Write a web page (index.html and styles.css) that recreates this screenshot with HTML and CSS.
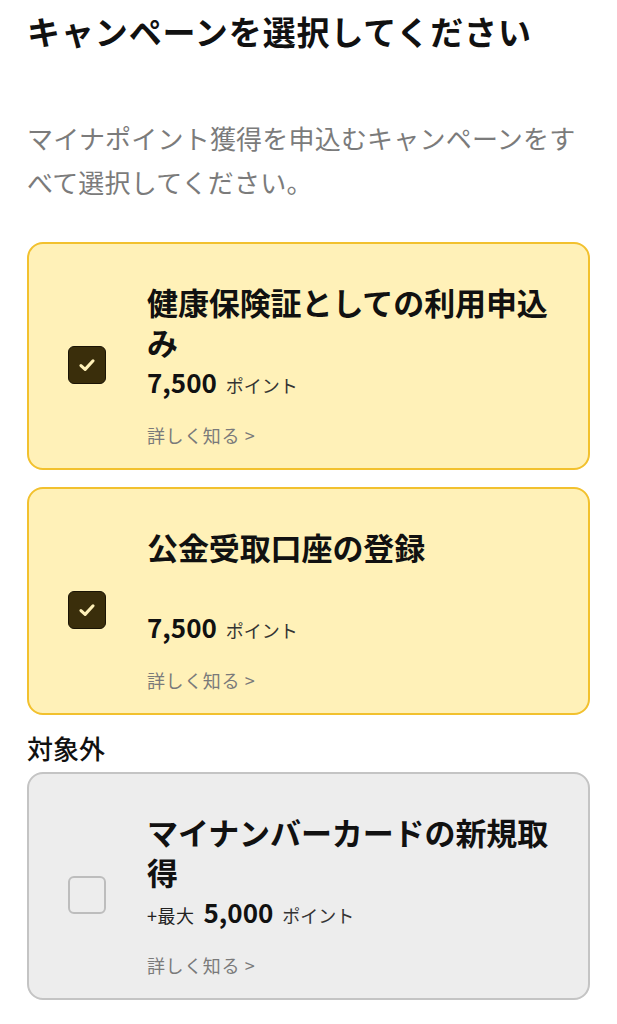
FILE: index.html
```html
<!DOCTYPE html>
<html lang="ja">
<head>
    <meta charset="UTF-8">
    <meta name="viewport" content="width=device-width, initial-scale=1.0">
    <title>キャンペーン選択</title>
    <link rel="stylesheet" href="styles.css">
</head>
<body>
    <div class="page">
        <h1 class="page-title">キャンペーンを選択してください</h1>
        <p class="page-desc">マイナポイント獲得を申込むキャンペーンをすべて選択してください。</p>

        <div class="card-list">
            <div class="card selected">
                <div class="check checked">
                    <svg width="22" height="22" viewBox="0 0 20 20">
                        <polyline points="4.5,10.5 8.3,14 15.5,6.2" fill="none" stroke="#fff1b8" stroke-width="2.8" stroke-linecap="round" stroke-linejoin="round"/>
                    </svg>
                </div>
                <div class="card-body">
                    <div class="card-title">健康保険証としての利用申込み</div>
                    <div class="card-points">
                        <span class="num">7,500</span>
                        <span class="unit">ポイント</span>
                    </div>
                    <div class="card-link">詳しく知る &gt;</div>
                </div>
            </div>

            <div class="card selected">
                <div class="check checked">
                    <svg width="22" height="22" viewBox="0 0 20 20">
                        <polyline points="4.5,10.5 8.3,14 15.5,6.2" fill="none" stroke="#fff1b8" stroke-width="2.8" stroke-linecap="round" stroke-linejoin="round"/>
                    </svg>
                </div>
                <div class="card-body">
                    <div class="card-title">公金受取口座の登録</div>
                    <div class="card-points">
                        <span class="num">7,500</span>
                        <span class="unit">ポイント</span>
                    </div>
                    <div class="card-link">詳しく知る &gt;</div>
                </div>
            </div>
        </div>

        <h2 class="section-label">対象外</h2>

        <div class="card disabled">
            <div class="check"></div>
            <div class="card-body">
                <div class="card-title">マイナンバーカードの新規取得</div>
                <div class="card-points">
                    <span class="prefix">+最大</span>
                    <span class="num">5,000</span>
                    <span class="unit">ポイント</span>
                </div>
                <div class="card-link">詳しく知る &gt;</div>
            </div>
        </div>
    </div>
</body>
</html>
```

FILE: styles.css
```css
body {
    margin: 0;
    background-color: #ffffff;
    font-family: "Noto Sans CJK JP", "Noto Sans", sans-serif;
    color: #111111;
}

.page {
    padding: 8px 27px 0;
}

.page-title {
    margin: 0;
    font-size: 33px;
    line-height: 46px;
    font-weight: 700;
    letter-spacing: 0.9px;
}

.page-desc {
    margin: 62px 0 0;
    font-size: 26px;
    line-height: 44px;
    color: #7b7b7b;
    letter-spacing: 0.2px;
}

.card-list {
    display: flex;
    flex-direction: column;
    gap: 17px;
    margin-top: 38px;
}

.card {
    display: flex;
    align-items: center;
    gap: 41px;
    padding: 38px 20px 21px 39px;
    border: 2px solid #f2c12e;
    border-radius: 16px;
    background-color: #fff1b8;
}

.card.disabled {
    margin-top: 6px;
    border-color: #c4c4c4;
    background-color: #ededed;
}

.check {
    flex: none;
    box-sizing: border-box;
    width: 38px;
    height: 38px;
    border: 2px solid #bdbdbd;
    border-radius: 6px;
    display: flex;
    align-items: center;
    justify-content: center;
}

.check.checked {
    border: 1px solid #1a1405;
    background-color: #3a2e0b;
}

.card-body {
    flex: 1;
    min-width: 0;
}

.card-title {
    min-height: 80px;
    font-size: 31px;
    line-height: 40px;
    font-weight: 700;
    letter-spacing: -0.1px;
}

.card-points {
    margin-top: 2px;
    height: 36px;
    display: flex;
    align-items: baseline;
    gap: 9px;
    line-height: 36px;
}

.card-points .num {
    font-size: 26px;
    font-weight: 700;
}

.card-points .unit {
    font-size: 18px;
    color: #333333;
}

.card-points .prefix {
    font-size: 18px;
    color: #222222;
    letter-spacing: 0.5px;
}

.card-link {
    margin-top: 23px;
    font-size: 18px;
    line-height: 24px;
    color: #7a7a7a;
    letter-spacing: 0.6px;
}

.section-label {
    margin: 15px 0 0;
    font-size: 26px;
    line-height: 36px;
    font-weight: 500;
}
```
